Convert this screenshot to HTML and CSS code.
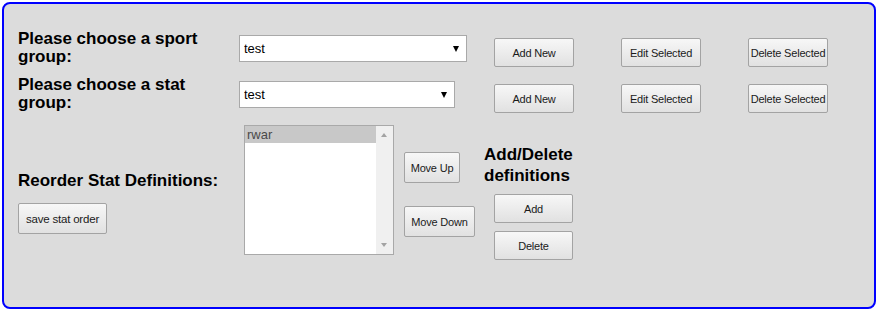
FILE: index.html
```html
<!DOCTYPE html>
<html lang="en">
<head>
    <meta charset="UTF-8">
    <title>Stat Definitions</title>
    <link rel="stylesheet" href="styles.css">
</head>
<body>
    <div class="panel">
        <!-- sport group row -->
        <div class="pick-row">
            <label class="big-label">Please choose a sport group:</label>
            <div class="select-wrap sport-select">
                <select class="drop"><option>test</option></select>
            </div>
            <button class="btn btn-wide">Add New</button>
            <button class="btn btn-wide">Edit Selected</button>
            <button class="btn btn-wide">Delete Selected</button>
        </div>
        <!-- stat group row -->
        <div class="pick-row">
            <label class="big-label">Please choose a stat group:</label>
            <div class="select-wrap stat-select">
                <select class="drop"><option>test</option></select>
            </div>
            <button class="btn btn-wide">Add New</button>
            <button class="btn btn-wide">Edit Selected</button>
            <button class="btn btn-wide">Delete Selected</button>
        </div>
        <!-- reorder definitions -->
        <div class="order-row">
            <div class="order-left">
                <div class="big-label reorder-label">Reorder Stat Definitions:</div>
                <button class="btn btn-save">save stat order</button>
            </div>
            <div class="listbox">
                <div class="list-items">
                    <div class="list-item selected">rwar</div>
                </div>
                <div class="scrollbar">
                    <span class="arrow-up"></span>
                    <span class="arrow-down"></span>
                </div>
            </div>
            <div class="move-col">
                <button class="btn btn-up">Move Up</button>
                <button class="btn btn-down">Move Down</button>
            </div>
            <div class="def-col">
                <h3 class="def-title">Add/Delete definitions</h3>
                <button class="btn btn-def">Add</button>
                <button class="btn btn-def">Delete</button>
            </div>
        </div>
    </div>
</body>
</html>
```
FILE: styles.css
```css
body {
    margin: 0;
    padding: 2px;
    font-family: "Liberation Sans", Arial, sans-serif;
    background-color: #ffffff;
}
.panel {
    box-sizing: border-box;
    width: 874px;
    height: 307px;
    border: 2px solid #0000ff;
    border-radius: 8px;
    background-color: #dcdcdc;
    padding: 26px 0 0 14px;
}
.big-label {
    font-size: 17px;
    font-weight: bold;
    line-height: 18px;
    color: #000;
}
.pick-row {
    display: grid;
    grid-template-columns: 221px 255px 127px 127px 1fr;
    align-items: start;
    height: 37px;
    margin-bottom: 9px;
}
.pick-row .big-label {
    width: 200px;
}
.select-wrap {
    position: relative;
    margin-top: 5px;
}
.sport-select {
    width: 228px;
}
.stat-select {
    width: 216px;
}
.drop {
    appearance: none;
    -webkit-appearance: none;
    box-sizing: border-box;
    width: 100%;
    height: 27px;
    border: 1px solid #a9a9a9;
    border-radius: 0;
    background: #ffffff;
    font-family: "Liberation Sans", Arial, sans-serif;
    font-size: 13px;
    color: #000;
    padding: 0 0 0 4px;
}
.select-wrap::after {
    content: "";
    position: absolute;
    right: 8px;
    top: 11px;
    border-left: 3.5px solid transparent;
    border-right: 3.5px solid transparent;
    border-top: 6px solid #000;
    pointer-events: none;
}
.btn {
    box-sizing: border-box;
    border: 1px solid #a3a3a3;
    border-radius: 2px;
    background: linear-gradient(#f7f7f7, #e1e1e1);
    font-family: "Liberation Sans", Arial, sans-serif;
    font-size: 11px;
    letter-spacing: -0.2px;
    color: #1a1a1a;
    padding: 0;
    cursor: pointer;
}
.btn-wide {
    width: 80px;
    height: 29px;
    margin-top: 8px;
}
.order-row {
    display: flex;
    align-items: flex-start;
    margin-top: 12px;
}
.order-left {
    width: 226px;
    display: flex;
    flex-direction: column;
    align-items: flex-start;
}
.reorder-label {
    margin-top: 47px;
    margin-bottom: 13px;
}
.btn-save {
    width: 89px;
    height: 31px;
    font-size: 11.5px;
}
.listbox {
    box-sizing: border-box;
    width: 150px;
    height: 130px;
    border: 1px solid #a9a9a9;
    background: #ffffff;
    display: flex;
    margin-right: 10px;
}
.list-items {
    flex: 1;
}
.list-item {
    height: 17px;
    line-height: 17px;
    font-size: 13px;
    padding-left: 2px;
    color: #4a4a4a;
}
.list-item.selected {
    background-color: #c8c8c8;
}
.scrollbar {
    width: 17px;
    background-color: #f0f0f0;
    position: relative;
}
.arrow-up, .arrow-down {
    position: absolute;
    left: 5px;
    border-left: 3.5px solid transparent;
    border-right: 3.5px solid transparent;
}
.arrow-up {
    top: 7px;
    border-bottom: 4px solid #a3a3a3;
}
.arrow-down {
    bottom: 7px;
    border-top: 4px solid #a3a3a3;
}
.move-col {
    width: 80px;
    display: flex;
    flex-direction: column;
    align-items: flex-start;
    padding-top: 27px;
}
.btn-up {
    width: 56px;
    height: 31px;
    margin-bottom: 23px;
}
.btn-down {
    width: 71px;
    height: 31px;
}
.def-col {
    display: flex;
    flex-direction: column;
    align-items: flex-start;
    padding-top: 19px;
}
.def-title {
    margin: 0 0 8px 0;
    width: 95px;
    font-size: 17px;
    line-height: 21px;
    font-weight: bold;
}
.btn-def {
    width: 79px;
    height: 29px;
    margin-left: 10px;
    margin-bottom: 8px;
}
```
